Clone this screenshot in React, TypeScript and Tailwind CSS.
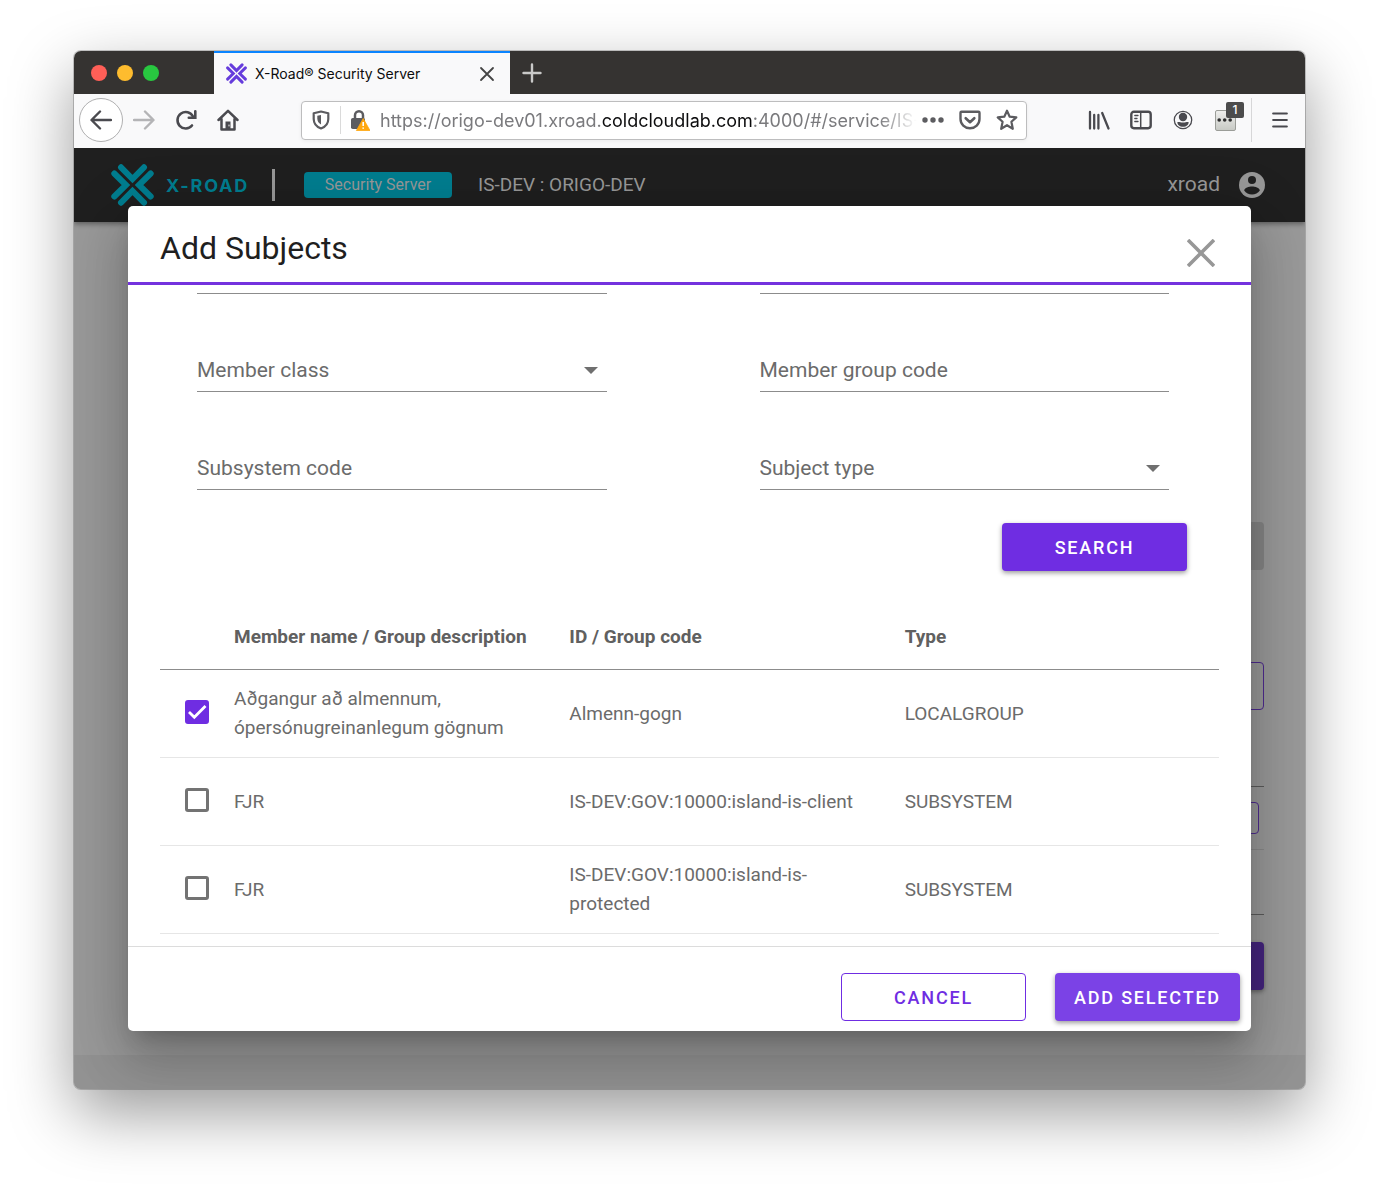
import React, { useState } from "react";

const chevrons = [
  "M10 3.300 21.500 15 33 3.300",
  "M3.300 9.500 15 21 3.300 32.500",
  "M39.700 9.500 28 21 39.700 32.500",
  "M10 38.700 21.500 27 33 38.700",
];

function XRoadMark({ className, color }: { className: string; color: string }) {
  return (
    <svg viewBox="0 0 43 42" className={className} fill="none" stroke={color} strokeWidth="6" strokeLinecap="round" strokeLinejoin="miter" aria-hidden="true">
      {chevrons.map((d) => (
        <path key={d} d={d} />
      ))}
    </svg>
  );
}

function TitleBar() {
  return (
    <div className="flex h-[43px] bg-[#353331]">
      <div className="flex w-[140px] items-center gap-2.5 pl-[17px]">
        <button aria-label="Close window" className="size-4 rounded-full bg-[#ff5f57]" />
        <button aria-label="Minimize window" className="size-4 rounded-full bg-[#febc2e]" />
        <button aria-label="Zoom window" className="size-4 rounded-full bg-[#28c840]" />
      </div>
      <div className="flex w-[296px] items-center border-t-2 border-[#0a84ff] bg-[#f9f9fa] pr-[15px] pl-3">
        <XRoadMark className="size-[21px]" color="#663cdc" />
        <span className="ml-2 flex-1 whitespace-nowrap font-[Inter,sans-serif] text-[14px] text-[#0c0c0d]">X-Road® Security Server</span>
        <button aria-label="Close tab">
          <svg viewBox="0 0 16 16" className="size-4" stroke="#444" strokeWidth="1.800" strokeLinecap="round" aria-hidden="true">
            <path d="M2 2 14 14M14 2 2 14" />
          </svg>
        </button>
      </div>
      <button aria-label="New tab" className="flex w-[44px] items-center justify-center">
        <svg viewBox="0 0 20 20" className="size-5" stroke="#c9c9c8" strokeWidth="2.400" strokeLinecap="round" aria-hidden="true">
          <path d="M10 1.500V18.500M1.500 10H18.500" />
        </svg>
      </button>
    </div>
  );
}

function ToolButton({ label, children }: { label: string; children: React.ReactNode }) {
  return (
    <button aria-label={label} className="relative flex h-11 w-[42px] items-center justify-center">
      {children}
    </button>
  );
}

function Toolbar() {
  return (
    <div className="flex h-[54px] items-center bg-[#f9f9fa] pr-1 pb-0.5 pl-[5px]">
      <button aria-label="Back" className="flex size-11 items-center justify-center rounded-full border border-[#b0b0b1] bg-white">
        <svg viewBox="0 0 22 20" className="h-5 w-[22px]" fill="none" stroke="#4a4a4f" strokeWidth="2.400" strokeLinecap="round" strokeLinejoin="round" aria-hidden="true">
          <path d="M21 10H2M10 1.500 1.500 10 10 18.500" />
        </svg>
      </button>
      <ToolButton label="Forward">
        <svg viewBox="0 0 22 20" className="h-5 w-[22px]" fill="none" stroke="#b4b4b6" strokeWidth="2.400" strokeLinecap="round" strokeLinejoin="round" aria-hidden="true">
          <path d="M1 10H20M12 1.500 20.500 10 12 18.500" />
        </svg>
      </ToolButton>
      <ToolButton label="Reload">
        <svg viewBox="0 0 22 22" className="size-[22px]" fill="none" stroke="#4a4a4f" strokeWidth="2.600" strokeLinecap="round" strokeLinejoin="round" aria-hidden="true">
          <path d="M17 16.500A8.200 8.200 0 1 1 18 7.500" />
          <path d="M20.300 2.200V8.700H13.800" strokeLinejoin="miter" />
        </svg>
      </ToolButton>
      <ToolButton label="Home">
        <svg viewBox="0 0 22 22" className="size-[22px]" fill="none" stroke="#4a4a4f" strokeWidth="2.500" strokeLinecap="round" strokeLinejoin="round" aria-hidden="true">
          <path d="M1.500 11 11 1.800 20.500 11M4.500 10V20.500H17.500V10" />
          <path d="M8.500 20V12.500H13.500V20Z" fill="#4a4a4f" stroke="none" />
          <path d="M12 16V17" stroke="#f9f9fa" strokeWidth="1" />
        </svg>
      </ToolButton>
      <div className="mr-[51px] ml-[52px] flex h-[39px] min-w-0 flex-1 items-center rounded border border-[#bdbdbe] bg-white pr-2 pl-2.5 shadow-[0_1px_4px_rgba(0,0,0,0.06)]">
        <button aria-label="Tracking protection" className="shrink-0">
          <svg viewBox="0 0 18 20" className="h-5 w-[18px]" fill="none" aria-hidden="true">
            <path d="M9 1.500 16.300 3.300V9C16.300 13.500 13 17 9 18.500 5 17 1.700 13.500 1.700 9V3.300Z" stroke="#5c5c60" strokeWidth="2.200" strokeLinejoin="round" />
            <path d="M9 5V14.500C6.500 13 5.300 11 5.300 8.500V5.800Z" fill="#5c5c60" />
          </svg>
        </button>
        <span className="ml-2.5 h-7 w-px shrink-0 bg-[#dadada]" />
        <button aria-label="Connection not secure" className="ml-[9px] shrink-0">
          <svg viewBox="0 0 20 22" className="h-[22px] w-5" fill="none" aria-hidden="true">
            <rect x="1" y="9" width="14" height="11" rx="1.800" fill="#5c5c60" />
            <path d="M5 10V6.200A4 4 0 0 1 13 6.200V10" stroke="#5c5c60" strokeWidth="2.500" />
            <path d="M13.200 9.500 20 21.500H6.400Z" fill="#ffa70f" stroke="#ffa70f" strokeWidth=".8" strokeLinejoin="round" />
            <path d="M13.200 13V17M13.200 18.500V19.800" stroke="#fff" strokeWidth="1.600" />
          </svg>
        </button>
        <div
          role="textbox"
          aria-label="Address"
          className="ml-2.5 min-w-0 flex-1 whitespace-nowrap font-[Inter,sans-serif] text-[18px] text-[#7a7a7d] [mask-image:linear-gradient(to_right,black_92%,transparent_99%)]"
        >
          https://origo-dev01.xroad.<span className="text-[#0c0c0d]">coldcloudlab.com</span>:4000/#/service/IS-
        </div>
        <div className="flex shrink-0 items-center gap-[15px]">
          <button aria-label="Page actions">
            <svg viewBox="0 0 22 6" className="h-1.5 w-[22px]" fill="#5c5c60" aria-hidden="true">
              <circle cx="3" cy="3" r="2.700" />
              <circle cx="11" cy="3" r="2.700" />
              <circle cx="19" cy="3" r="2.700" />
            </svg>
          </button>
          <button aria-label="Save to Pocket">
            <svg viewBox="0 0 22 20" className="h-5 w-[22px]" fill="none" stroke="#5c5c60" strokeWidth="2.400" strokeLinecap="round" strokeLinejoin="round" aria-hidden="true">
              <path d="M2.500 1.800H19.500C20.100 1.800 20.500 2.200 20.500 2.800V9A9.500 9.300 0 0 1 1.500 9V2.800C1.500 2.200 1.900 1.800 2.500 1.800Z" />
              <path d="M6.700 8.200 11 12.200 15.300 8.200" strokeWidth="2.600" />
            </svg>
          </button>
          <button aria-label="Bookmark">
            <svg viewBox="0 0 22 22" className="size-[22px]" fill="none" stroke="#5c5c60" strokeWidth="2.200" strokeLinejoin="round" aria-hidden="true">
              <path d="M11 1.700 13.700 7.700 20.300 8.400 15.400 12.800 16.800 19.800 11 16.200 5.200 19.800 6.600 12.800 1.700 8.400 8.300 7.700Z" />
            </svg>
          </button>
        </div>
      </div>
      <ToolButton label="Library">
        <svg viewBox="0 0 22 20" className="h-5 w-[22px]" stroke="#4a4a4f" strokeWidth="2.300" strokeLinecap="round" aria-hidden="true">
          <path d="M2 2V18.500M6.200 5V18.500M10.400 5V18.500M14.200 3 20.500 18.500" />
        </svg>
      </ToolButton>
      <ToolButton label="Sidebars">
        <svg viewBox="0 0 22 20" className="h-5 w-[22px]" fill="none" stroke="#4a4a4f" strokeLinecap="round" aria-hidden="true">
          <rect x="1.300" y="1.800" width="19.400" height="16.400" rx="2.600" strokeWidth="2.400" />
          <path d="M10.700 2V18" strokeWidth="1.500" />
          <path d="M4.800 5.500H8M4.800 8.500H7M4.800 11.500H8" strokeWidth="1.300" />
        </svg>
      </ToolButton>
      <ToolButton label="Account">
        <svg viewBox="0 0 20 20" className="size-5" fill="#4a4a4f" aria-hidden="true">
          <circle cx="10" cy="10" r="8.700" fill="none" stroke="#4a4a4f" strokeWidth="1.300" />
          <circle cx="10" cy="7" r="4.200" />
          <path d="M4.300 12.200C6 11.300 7 12.600 10 12.600S14 11.300 15.700 12.200C15.500 15 13 16.800 10 16.800S4.500 15 4.300 12.200Z" />
        </svg>
      </ToolButton>
      <ToolButton label="Extension, 1 notification">
        <span className="flex size-[21px] items-center justify-center rounded-xs border border-[#9b9d98] bg-linear-to-b from-[#eeeeec] to-[#c8cac5]">
          <svg viewBox="0 0 16 4" className="h-1 w-4" fill="#2e2e2e" aria-hidden="true">
            <circle cx="2.200" cy="2" r="1.800" />
            <circle cx="7.700" cy="2" r="1.800" />
            <circle cx="13.200" cy="2" r="1.800" />
          </svg>
        </span>
        <span className="absolute top-1 right-0.5 flex h-4 w-[18px] items-center justify-center rounded-xs bg-[#4c4c4c] font-[Inter,sans-serif] text-[12px] font-medium text-white">
          1
        </span>
      </ToolButton>
      <span className="mr-[7px] ml-[5px] h-11 w-px bg-[#d7d7d8]" />
      <ToolButton label="Menu">
        <svg viewBox="0 0 16 16" className="size-4" stroke="#4a4a4f" strokeWidth="2.200" strokeLinecap="round" aria-hidden="true">
          <path d="M1.200 1.500H14.800M1.200 8H14.800M1.200 14.500H14.800" />
        </svg>
      </ToolButton>
    </div>
  );
}

function AppHeader() {
  return (
    <header className="flex h-[74px] items-center bg-[#1f1f1f] pr-10 pl-[37px] text-[#979797] shadow-[0_2px_5px_rgba(0,0,0,0.4)]">
      <XRoadMark className="h-[42px] w-[43px]" color="#007d8f" />
      <span className="ml-3 w-[94px] font-[Inter,sans-serif] text-[18px] font-bold tracking-widest whitespace-nowrap text-[#007d8f]">X-ROAD</span>
      <span className="ml-3 h-8 w-[3px] bg-[#979797]" />
      <span className="ml-[29px] flex h-[26px] w-[148px] items-center justify-center rounded bg-[#007d8f] text-base">Security Server</span>
      <span className="ml-[26px] text-[19px]">IS-DEV : ORIGO-DEV</span>
      <button className="ml-auto flex items-center gap-[19px] text-[21px]">
        xroad
        <svg viewBox="0 0 26 26" className="size-[26px]" aria-hidden="true">
          <circle cx="13" cy="13" r="13" fill="#979797" />
          <circle cx="13" cy="8" r="4" fill="#1f1f1f" />
          <path d="M5.200 18.600C5.400 15.800 10 14.500 13 14.500S20.600 15.800 20.800 18.600C19 21.300 16.200 22.500 13 22.500S7 21.300 5.200 18.600Z" fill="#1f1f1f" />
        </svg>
      </button>
    </header>
  );
}

function ServicePage() {
  return (
    <div className="col-start-1 row-start-1 flex flex-col bg-[#999]" aria-hidden="true">
      <AppHeader />
      <div className="flex flex-1 flex-col items-end pr-[41px] pl-[60px]">
        <span className="mt-[300px] h-12 w-[185px] rounded bg-[#858585]" />
        <span className="mt-[92px] h-12 w-[185px] rounded border border-[#4e2b8e]" />
        <span className="mt-[76px] h-px w-full bg-[#5c5c5c]" />
        <span className="mt-[15px] mr-[5px] h-8 w-[110px] rounded border border-[#4e2b8e]" />
        <span className="mt-[15px] h-px w-full bg-[#898989]" />
        <span className="mt-16 h-px w-full bg-[#5c5c5c]" />
        <span className="mt-[27px] h-12 w-[185px] rounded bg-[#45257e] shadow-[0_2px_4px_rgba(0,0,0,0.35)]" />
      </div>
      <div className="h-[34px] bg-[#929292]" />
    </div>
  );
}

const fieldClass =
  "block h-[42px] w-full appearance-none rounded-none border-b border-[#8c8c8c] bg-transparent text-[21px] text-[#6b6b6b] outline-none placeholder:text-[#6b6b6b] placeholder:opacity-100";

function TextField({ label }: { label: string }) {
  return <input aria-label={label} placeholder={label} className={`${fieldClass} pb-0.5`} />;
}

function SelectField({ label }: { label: string }) {
  return (
    <div className="relative">
      <select aria-label={label} className={fieldClass} defaultValue="">
        <option value="">{label}</option>
      </select>
      <svg viewBox="0 0 14 7" className="pointer-events-none absolute top-[17px] right-[9px] h-[7px] w-3.5" fill="#6f6f6f" aria-hidden="true">
        <path d="M0 0H14L7 7Z" />
      </svg>
    </div>
  );
}

type Subject = { name: string; id: string; type: string };

const subjects: Subject[] = [
  { name: "Aðgangur að almennum, ópersónugreinanlegum gögnum", id: "Almenn-gogn", type: "LOCALGROUP" },
  { name: "FJR", id: "IS-DEV:GOV:10000:island-is-client", type: "SUBSYSTEM" },
  { name: "FJR", id: "IS-DEV:GOV:10000:island-is-protected", type: "SUBSYSTEM" },
];

function SubjectTable() {
  const [selected, setSelected] = useState([true, false, false]);
  return (
    <table className="w-full table-fixed text-left text-[19px] leading-[29px] text-[#6b6b6b]">
      <thead>
        <tr className="h-[65px] border-b border-[#8c8c8c] text-[#606060]">
          <th className="w-[53px]" />
          <th className="px-[21px] font-bold whitespace-nowrap">Member name / Group description</th>
          <th className="px-[21px] font-bold">ID / Group code</th>
          <th className="px-[21px] font-bold">Type</th>
        </tr>
      </thead>
      <tbody>
        {subjects.map((s, i) => (
          <tr key={s.id} className="h-[88px] border-b border-[#e6e6e6]">
            <td className="pb-[3px] pl-[25px]">
              <label className="relative flex size-6">
                <input
                  type="checkbox"
                  aria-label={s.name}
                  checked={selected[i]}
                  onChange={() => setSelected(selected.map((v, j) => (j === i ? !v : v)))}
                  className="peer size-6 appearance-none rounded-[3px] border-[3px] border-[#737373] checked:border-[#6f2de2] checked:bg-[#6f2de2]"
                />
                <svg viewBox="0 0 24 24" className="pointer-events-none absolute inset-0 hidden size-6 peer-checked:block" fill="none" stroke="#fff" strokeWidth="2.800" aria-hidden="true">
                  <path d="M4 12 9.300 17.300 20.500 6" />
                </svg>
              </label>
            </td>
            <td className="px-[21px]">{s.name}</td>
            <td className="px-[21px]">{s.id}</td>
            <td className="px-[21px]">{s.type}</td>
          </tr>
        ))}
      </tbody>
    </table>
  );
}

function AddSubjectsDialog() {
  return (
    <div
      role="dialog"
      aria-labelledby="dialog-title"
      className="z-10 col-start-1 row-start-1 mx-[54px] my-[58px] flex min-w-0 flex-col overflow-hidden rounded-[5px] bg-white shadow-[0_14px_20px_-9px_rgba(0,0,0,0.2),0_32px_50px_4px_rgba(0,0,0,0.14),0_12px_60px_10px_rgba(0,0,0,0.12)]"
    >
      <div className="flex h-[79px] items-center justify-between border-b-3 border-[#7432de] pt-2 pr-9 pl-8">
        <h1 id="dialog-title" className="text-[32px] leading-10 text-[#1f1f1f]">
          Add Subjects
        </h1>
        <button aria-label="Close" className="pt-2.5">
          <svg viewBox="0 0 28 28" className="size-7" stroke="#979797" strokeWidth="3.600" aria-hidden="true">
            <path d="M1 1 27 27M27 1 1 27" />
          </svg>
        </button>
      </div>
      <div className="flex-1 px-8 pb-3">
        <div className="grid grid-cols-2 gap-x-[153px] gap-y-14 pr-[50px] pl-[37px]">
          <input aria-label="Name" className="block h-[9px] w-full border-b border-[#8c8c8c] outline-none" />
          <input aria-label="Instance" className="block h-[9px] w-full border-b border-[#8c8c8c] outline-none" />
          <SelectField label="Member class" />
          <TextField label="Member group code" />
          <TextField label="Subsystem code" />
          <SelectField label="Subject type" />
        </div>
        <div className="mt-[33px] mb-[33px] flex justify-end pr-8">
          <button className="h-12 w-[185px] rounded bg-[#6f2de2] text-[18px] font-medium tracking-widest text-white shadow-[0_2px_5px_rgba(0,0,0,0.4)]">SEARCH</button>
        </div>
        <SubjectTable />
      </div>
      <div className="flex justify-end gap-[29px] border-t border-[#dcdcdc] pt-[26px] pr-[11px] pb-2.5">
        <button className="h-12 w-[185px] rounded border border-[#6f2de2] text-[18px] font-medium tracking-widest text-[#6f2de2]">CANCEL</button>
        <button className="h-12 w-[185px] rounded bg-[#7b42e6] text-[18px] font-medium tracking-widest whitespace-nowrap text-white shadow-[0_2px_5px_rgba(0,0,0,0.4)]">ADD SELECTED</button>
      </div>
    </div>
  );
}

export default function App() {
  return (
    <div className="flex min-h-screen flex-col bg-white px-[74px] pt-[51px] pb-[98px] font-[Roboto,sans-serif]">
      <div className="flex flex-1 flex-col overflow-hidden rounded-[7px] shadow-[0_0_0_1px_rgba(0,0,0,0.2),0_24px_64px_rgba(0,0,0,0.4)]">
        <TitleBar />
        <Toolbar />
        <main className="grid flex-1 overflow-hidden">
          <ServicePage />
          <AddSubjectsDialog />
        </main>
      </div>
    </div>
  );
}
